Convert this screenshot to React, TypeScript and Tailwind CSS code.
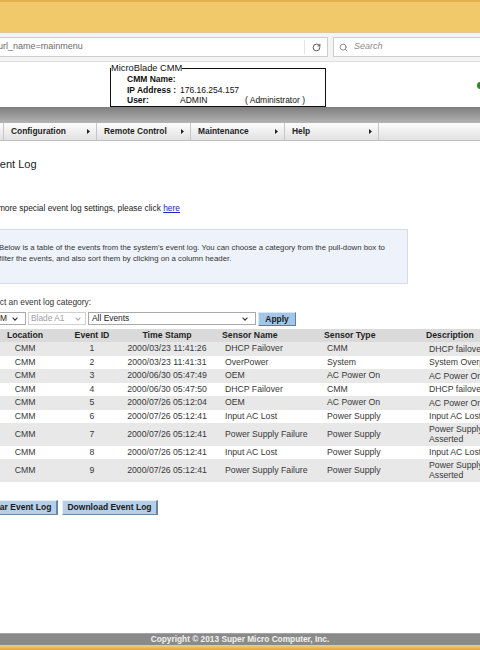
import { RotateCw, Search } from 'lucide-react';

interface EventRow {
  location: string;
  id: number;
  time: string;
  sensorName: string;
  sensorType: string;
  description: string[];
}

const events: EventRow[] = [
  { location: 'CMM', id: 1, time: '2000/03/23 11:41:26', sensorName: 'DHCP Failover', sensorType: 'CMM', description: ['DHCP failover'] },
  { location: 'CMM', id: 2, time: '2000/03/23 11:41:31', sensorName: 'OverPower', sensorType: 'System', description: ['System Overpower'] },
  { location: 'CMM', id: 3, time: '2000/06/30 05:47:49', sensorName: 'OEM', sensorType: 'AC Power On', description: ['AC Power On'] },
  { location: 'CMM', id: 4, time: '2000/06/30 05:47:50', sensorName: 'DHCP Failover', sensorType: 'CMM', description: ['DHCP failover'] },
  { location: 'CMM', id: 5, time: '2000/07/26 05:12:04', sensorName: 'OEM', sensorType: 'AC Power On', description: ['AC Power On'] },
  { location: 'CMM', id: 6, time: '2000/07/26 05:12:41', sensorName: 'Input AC Lost', sensorType: 'Power Supply', description: ['Input AC Lost'] },
  { location: 'CMM', id: 7, time: '2000/07/26 05:12:41', sensorName: 'Power Supply Failure', sensorType: 'Power Supply', description: ['Power Supply Failure', 'Asserted'] },
  { location: 'CMM', id: 8, time: '2000/07/26 05:12:41', sensorName: 'Input AC Lost', sensorType: 'Power Supply', description: ['Input AC Lost'] },
  { location: 'CMM', id: 9, time: '2000/07/26 05:12:41', sensorName: 'Power Supply Failure', sensorType: 'Power Supply', description: ['Power Supply Failure', 'Asserted'] },
];

const menu = ['Configuration', 'Remote Control', 'Maintenance', 'Help'];

function Chevron({ color = '#444' }: { color?: string }) {
  return (
    <svg width="6" height="4" viewBox="0 0 6 4" className="shrink-0">
      <path d="M0.6 0.6 L3 3.2 L5.4 0.6" stroke={color} strokeWidth="1.1" fill="none" />
    </svg>
  );
}

function MenuArrow() {
  return (
    <svg width="3" height="5" viewBox="0 0 3 5" className="shrink-0">
      <path d="M0 0 L3 2.5 L0 5 Z" fill="#222" />
    </svg>
  );
}

export default function App() {
  return (
    <div className="w-[480px] h-[650px] overflow-hidden flex flex-col bg-white font-['Liberation_Sans',Arial,sans-serif] text-[#222]">
      {/* Window title bar */}
      <div className="h-[33px] shrink-0 bg-[#f1c96b] border-t-2 border-t-[#e3b24f] border-b border-b-[#dcc79c]" />

      {/* Browser toolbar */}
      <div className="h-[29px] shrink-0 bg-[#f4f4f4] border-b border-[#dedede] flex items-center gap-[5px]">
        <div className="h-[20px] w-[328px] bg-white border border-l-0 border-[#cdcdcd] flex items-center">
          <span className="flex-1 -ml-[2px] text-[9px] text-[#6b6b6b] whitespace-nowrap">url_name=mainmenu</span>
          <div className="w-px h-[14px] bg-[#e4e4e4]" />
          <div className="w-[22px] flex justify-center">
            <RotateCw size={9} strokeWidth={2.6} color="#555" />
          </div>
        </div>
        <div className="h-[20px] flex-1 -mr-[3px] bg-white border border-[#cdcdcd] flex items-center gap-[6px] pl-[5px]">
          <Search size={9} strokeWidth={2.2} color="#777" />
          <span className="text-[9px] italic text-[#8a8a8a]">Search</span>
        </div>
      </div>

      {/* Page header */}
      <div className="h-[45px] shrink-0 flex items-end">
        <div className="w-[110px] shrink-0" />
        <fieldset className="w-[216px] h-[44px] shrink-0 border-[1.5px] border-[#111] px-0">
          <legend className="text-[9.3px] leading-[11px] text-[#111] px-0">MicroBlade CMM</legend>
          <div className="pl-[16px] text-[8.5px] leading-[10.5px] text-[#111]">
            <div className="flex">
              <span className="w-[53px] font-bold">CMM Name:</span>
            </div>
            <div className="flex">
              <span className="w-[53px] font-bold">IP Address :</span>
              <span>176.16.254.157</span>
            </div>
            <div className="flex">
              <span className="w-[53px] font-bold">User:</span>
              <span className="w-[65px]">ADMIN</span>
              <span>( Administrator )</span>
            </div>
          </div>
        </fieldset>
        <div className="flex-1" />
        <div className="w-[7px] h-[7px] rounded-full bg-[#2f8a2f] self-center -mr-[4px] mt-[1px]" />
      </div>

      {/* Grey band */}
      <div className="h-[16px] shrink-0 bg-linear-to-b from-[#7e7e7e] to-[#b3b3b3]" />

      {/* Menu bar */}
      <div className="h-[18px] shrink-0 bg-linear-to-b from-[#fdfdfd] to-[#e1e1e1] border-b border-[#bdbdbd] flex pl-[3px]">
        {menu.map((item, i) => (
          <div
            key={item}
            className={`w-[94px] shrink-0 flex items-center justify-between pl-[7px] pr-[6px] border-r border-[#c6c6c6] ${i === 0 ? 'border-l' : ''}`}
          >
            <span className="text-[8.4px] font-bold text-[#1e1e1e] whitespace-nowrap">{item}</span>
            <MenuArrow />
          </div>
        ))}
      </div>

      {/* Content */}
      <div className="flex-1 overflow-hidden">
        <div className="-ml-[20px] w-[620px]">
          <h1 className="mt-[16px] pl-[7px] text-[11px] leading-[14px] font-normal text-[#222]">Event Log</h1>

          <p className="mt-[32px] pl-[3px] text-[8.4px] leading-[10px] text-[#222] whitespace-nowrap">
            For more special event log settings, please click{' '}
            <a href="#" className="text-[#2323c8] underline">here</a>
          </p>

          <div className="mt-[16px] ml-[3px] w-[425px] h-[55px] bg-[#eef3fb] border border-[#d5dce7] pl-[15px] pt-[12px] text-[7.8px] leading-[11px] text-[#333] whitespace-nowrap">
            Below is a table of the events from the system's event log. You can choose a category from the pull-down box to
            <br />
            filter the events, and also sort them by clicking on a column header.
          </div>

          <p className="mt-[13px] pl-[3px] text-[8.4px] leading-[10px] text-[#333]">Select an event log category:</p>

          <div className="mt-[5px] ml-[3px] h-[13px] flex gap-[2px] text-[8.4px]">
            <div className="w-[43px] bg-white border border-[#a9a9a9] flex items-center justify-between pl-[3px] pr-[7px]">
              <span className="text-[#222]">CMM</span>
              <Chevron color="#333" />
            </div>
            <div className="w-[58px] bg-white border border-[#d0d0d0] flex items-center justify-between pl-[2px] pr-[4px]">
              <span className="text-[#a0a0a0]">Blade A1</span>
              <Chevron color="#aaa" />
            </div>
            <div className="w-[168px] bg-white border border-[#a9a9a9] flex items-center justify-between pl-[3px] pr-[7px]">
              <span className="text-[#222]">All Events</span>
              <Chevron color="#333" />
            </div>
            <button className="w-[38px] h-[14px] bg-[#a4c6e6] border border-t-[#d7e6f4] border-l-[#d7e6f4] border-r-[#5f7f9e] border-b-[#5f7f9e] text-[8.4px] font-bold text-[#1a1a1a] leading-none">
              Apply
            </button>
          </div>

          <table className="mt-[4px] table-fixed border-collapse w-[554px] text-[8.7px] text-[#383838]">
            <colgroup>
              <col className="w-[90px]" />
              <col className="w-[44px]" />
              <col className="w-[106px]" />
              <col className="w-[102px]" />
              <col className="w-[102px]" />
              <col className="w-[110px]" />
            </colgroup>
            <thead>
              <tr className="h-[13px] bg-[#dadada] text-[#1f1f1f]">
                <th className="font-bold text-center p-0">Location</th>
                <th className="font-bold text-center p-0">Event ID</th>
                <th className="font-bold text-center p-0">Time Stamp</th>
                <th className="font-bold text-left pl-[2px] py-0">Sensor Name</th>
                <th className="font-bold text-left pl-[2px] py-0">Sensor Type</th>
                <th className="font-bold text-left pl-[2px] py-0">Description</th>
              </tr>
            </thead>
            <tbody>
              {events.map((e, i) => (
                <tr
                  key={e.id}
                  className={`${e.description.length > 1 ? 'h-[22.5px]' : 'h-[13.5px]'} ${i % 2 === 0 ? 'bg-[#e8e8e8]' : 'bg-white'}`}
                >
                  <td className="text-center p-0">{e.location}</td>
                  <td className="text-center p-0">{e.id}</td>
                  <td className="text-center p-0 whitespace-nowrap">{e.time}</td>
                  <td className="pl-[5px] py-0 whitespace-nowrap">{e.sensorName}</td>
                  <td className="pl-[5px] py-0 whitespace-nowrap">{e.sensorType}</td>
                  <td className="pl-[5px] py-0 whitespace-nowrap leading-[10px]">
                    {e.description.map((line) => (
                      <div key={line}>{line}</div>
                    ))}
                  </td>
                </tr>
              ))}
            </tbody>
          </table>

          <div className="mt-[18px] ml-[1px] flex gap-[4px]">
            <button className="w-[77px] h-[15px] bg-[#b5cfe9] border border-t-[#e2edf8] border-l-[#e2edf8] border-r-[#6a86a3] border-b-[#6a86a3] border-r-2 text-[8.5px] font-bold text-[#1a1a1a] leading-none">
              Clear Event Log
            </button>
            <button className="w-[96px] h-[15px] bg-[#b5cfe9] border border-t-[#e2edf8] border-l-[#e2edf8] border-r-[#6a86a3] border-b-[#6a86a3] border-r-2 text-[8.5px] font-bold text-[#1a1a1a] leading-none">
              Download Event Log
            </button>
          </div>
        </div>
      </div>

      {/* Footer */}
      <div className="h-[12px] shrink-0 bg-[#8a8a8a] border-t border-[#a3a3a3] flex items-center justify-center">
        <span className="text-[8.3px] font-bold text-[#f2f2f2] leading-none">Copyright © 2013 Super Micro Computer, Inc.</span>
      </div>
      <div className="h-[5px] shrink-0 bg-linear-to-b from-[#f6cf78] to-[#e3a545]" />
    </div>
  );
}
